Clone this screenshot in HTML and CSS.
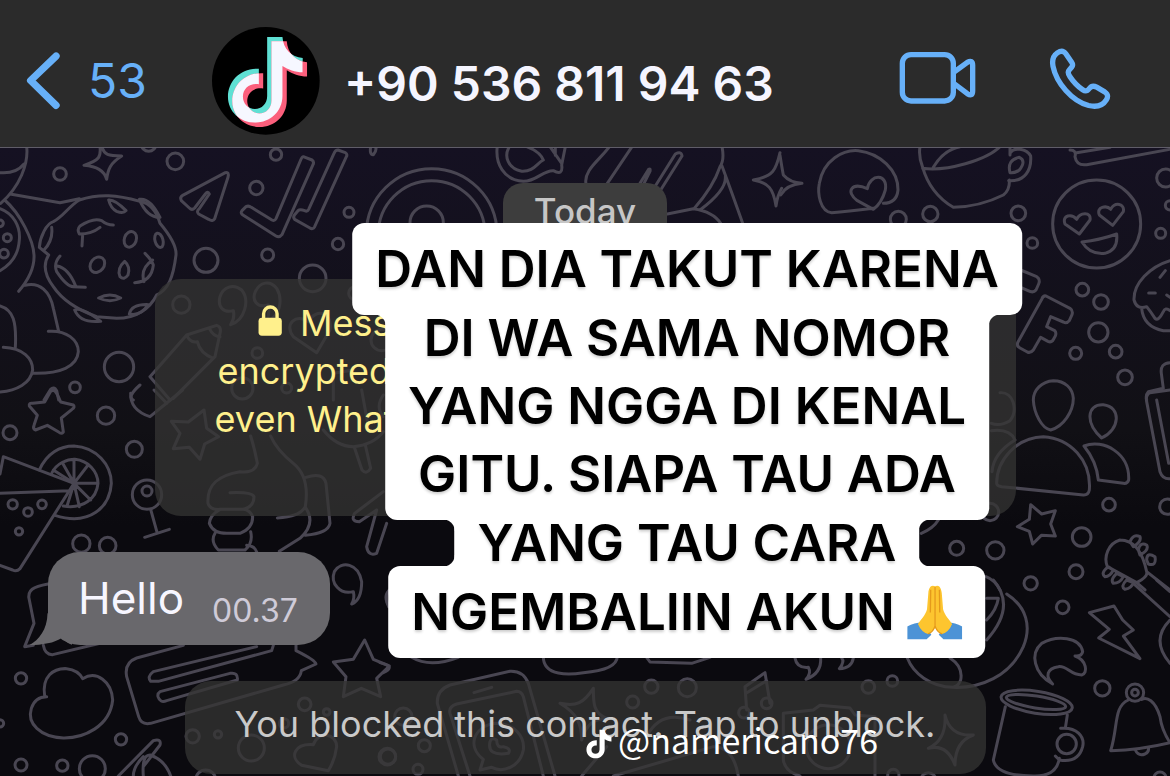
FILE: index.html
```html
<!DOCTYPE html>
<html lang="id">
<head>
  <meta charset="UTF-8" />
  <meta name="viewport" content="width=device-width, initial-scale=1" />
  <title>+90 536 811 94 63</title>
  <link rel="stylesheet" href="styles.css">
</head>
<body>
  <header class="topbar">
    <a href="#chats" class="back" aria-label="Back, 53 unread">
      <svg class="back-icon" viewBox="74 150 112 184"><path d="M168 168L91 242L168 317" /></svg>
      <span>53</span>
    </a>
    <svg class="avatar" viewBox="636 80 325 325" role="img" aria-label="Profile photo">
      <defs>
        <path id="note" d="M802 110H848C850 144 874 171 909 173V216C886 216 865 208 848 197V288C848 334 811 368 766 368C720 368 684 334 684 290C684 243 722 203 777 206V252C750 248 729 264 729 290C729 311 745 327 765 327C786 327 802 311 802 288Z" />
        <clipPath id="note-clip"><use href="#note" /></clipPath>
      </defs>
      <circle cx="798" cy="242" r="162" fill="#000" />
      <use href="#note" fill="#5fe0d4" />
      <use href="#note" x="13" y="13" fill="#fb5f7c" />
      <g clip-path="url(#note-clip)"><use href="#note" x="13" y="13" fill="#f6f7ff" /></g>
    </svg>
    <h1 class="contact">+90 536 811 94 63</h1>
    <div class="actions">
      <button type="button" aria-label="Video call">
        <svg class="video-icon" viewBox="350 150 240 168">
          <rect x="363" y="164" width="153" height="139" rx="26" />
          <path d="M520 215L558 187Q574 178 574 196V273Q574 291 558 281L520 252" />
        </svg>
      </button>
      <button type="button" aria-label="Voice call">
        <svg class="phone-icon" viewBox="804 136 192 194">
          <path d="M832 156C842 149 851 150 857 158L875 184C881 193 877 198 868 207C862 213 864 219 870 228C880 243 893 257 908 267C917 273 922 271 928 263C934 255 941 254 950 259L974 273C984 280 985 287 979 297C968 315 948 319 926 314C876 301 829 246 819 196C816 180 819 165 832 156Z" />
        </svg>
      </button>
    </div>
  </header>

  <main class="chat">
    <svg class="wallpaper" viewBox="0 148 1170 628" preserveAspectRatio="xMinYMin slice" aria-hidden="true">
      <!-- top left: planet, paper plane, ticks -->
      <g transform="translate(0 140) scale(.33333)">
        <circle cx="180" cy="102" r="19" /><circle cx="526" cy="64" r="25" /><circle cx="828" cy="44" r="17" />
        <circle cx="769" cy="144" r="20" /><circle cx="1047" cy="217" r="15" /><circle cx="1014" cy="312" r="17" />
        <circle cx="803" cy="345" r="18" /><circle cx="618" cy="361" r="36" /><circle cx="938" cy="415" r="40" />
        <circle cx="544" cy="494" r="26" /><circle cx="357" cy="681" r="44" /><circle cx="225" cy="742" r="16" />
        <circle cx="22" cy="293" r="12" /><circle cx="12" cy="341" r="13" /><circle cx="0" cy="250" r="10" />
        <circle cx="772" cy="639" r="16" /><circle cx="446" cy="12" r="22" /><circle cx="727" cy="745" r="32" />
        <circle cx="860" cy="744" r="15" /><circle cx="1066" cy="460" r="20" />
        <path d="M300 20C303 50 300 60 252 76C290 80 312 90 320 118C324 88 330 70 365 48C325 48 312 45 306 20" />
        <path d="M80 20C86 70 60 140 2 190M0 98Q48 102 72 72M30 162L180 188L238 176M0 206C40 220 62 260 58 300C55 350 30 375 0 392M14 180C60 220 100 300 102 345C104 385 85 420 56 454" />
        <path d="M75 436C120 425 150 455 160 505L176 574M145 574C200 570 235 600 235 635C232 680 180 702 100 700M0 498C40 510 50 545 46 622M10 622C70 625 98 655 98 690C92 730 50 752 0 756" />
        <path d="M238 180C300 160 350 165 420 184C450 190 470 215 480 250C505 280 530 320 528 345C520 410 505 450 470 465C450 505 410 535 350 535L290 530C220 505 180 470 160 440C130 400 130 370 146 345L118 322C120 290 140 250 160 245C190 230 205 200 238 180Z" />
        <path d="M326 180Q345 178 378 212Q370 222 350 214Q332 205 326 180ZM418 178Q450 172 480 232Q440 232 418 178ZM155 262Q160 300 132 330M340 255Q320 255 305 242Q280 232 240 258Q230 268 238 282Q275 282 300 262M246 318L248 284M180 348Q160 370 170 395Q200 440 220 440L256 442M172 378Q205 385 226 436M435 340Q455 360 460 375Q455 425 404 428M458 360Q420 385 432 425M296 474Q330 456 362 474Q330 490 296 474ZM224 510Q245 500 302 544Q240 550 224 510ZM388 522Q395 492 445 494Q420 530 388 522Z" />
        <ellipse cx="391" cy="298" rx="18" ry="24" transform="rotate(20 391 298)" /><ellipse cx="477" cy="301" rx="12" ry="22" transform="rotate(-15 477 301)" />
        <ellipse cx="292" cy="374" rx="20" ry="25" transform="rotate(38 292 374)" /><path d="M374 364Q350 385 360 410Q372 422 384 405Q392 380 374 364Z" />
        <path d="M676 98Q688 94 684 112L644 236Q638 246 626 238L596 222Q588 214 598 206L628 162Q624 152 616 162L584 204Q576 212 568 204L544 182Q538 172 548 166Z" />
        <path d="M910 50L936 60Q944 66 938 76L846 284Q838 294 828 288L730 226Q720 220 726 212L738 200Q746 196 754 202L816 240Q824 244 828 236L902 60Q906 50 910 50Z" />
        <path d="M1014 30L1036 38Q1044 44 1038 52L944 260Q938 270 930 264L884 238Q878 232 884 224L894 212Q900 206 914 212Q922 216 926 208L1002 40Q1006 30 1014 30Z" />
        <path d="M1112 20Q1108 45 1120 44Q1132 30 1126 20M700 512C670 520 652 500 660 470C670 440 700 430 725 450C750 480 735 540 692 554Q705 535 700 512ZM805 495C770 505 755 480 766 455C780 425 810 420 830 445C850 480 840 530 800 545Q810 520 805 495Z" />
        <path d="M450 710L560 585L650 556Q665 560 660 580L645 650L520 775M560 585Q570 610 592 605Q600 640 640 655M628 565Q640 590 660 590M420 735Q380 770 400 780M450 710L510 780M132 780L152 748Q162 738 170 752L176 780M950 638L880 590C850 550 890 520 925 545C950 500 1000 520 990 570Z" />
        <circle cx="1145" cy="600" r="32" /><path d="M1000 780V700L1060 690" />
      </g>

      <!-- top middle: disc, candy, hand -->
      <g transform="translate(380 140) scale(.33333)">
        <circle cx="155" cy="282" r="196" /><circle cx="155" cy="282" r="160" /><circle cx="140" cy="248" r="50" />
        <path d="M352 18C345 70 370 120 430 124C470 124 490 90 520 92Q550 108 545 75L556 20M388 20C370 50 385 85 425 94C460 96 470 70 490 60Q480 35 440 20M510 20L545 70M526 20V46" />
        <path d="M688 20C660 60 610 90 618 132M756 20L682 130M780 130L806 88Q812 84 810 94L792 130M826 138L886 42Q904 32 906 48L842 150M1026 20Q1034 60 1020 80Q1000 140 942 206M1026 78Q1060 170 1088 250M862 222L940 206Q1000 215 1022 250M1036 110Q1040 150 960 210" />
        <path d="M1200 38C1188 90 1180 110 1120 120C1165 128 1180 145 1188 198C1192 170 1196 160 1205 145" />
      </g>

      <!-- top right: cup, smiley, cupcake, letter F -->
      <g transform="translate(780 140) scale(.33333)">
        <circle cx="355" cy="238" r="24" /><circle cx="451" cy="222" r="23" /><circle cx="715" cy="220" r="22" />
        <circle cx="757" cy="309" r="16" /><circle cx="907" cy="449" r="19" /><circle cx="963" cy="486" r="22" />
        <circle cx="955" cy="577" r="29" /><circle cx="887" cy="640" r="18" /><circle cx="1007" cy="635" r="19" />
        <circle cx="1035" cy="712" r="22" /><circle cx="1142" cy="280" r="15" /><circle cx="1157" cy="114" r="27" /><circle cx="1170" cy="196" r="14" />
        <path d="M0 46Q6 85 10 105Q30 128 66 130Q20 134 2 165" />
        <path d="M280 205Q200 215 155 218C120 215 112 160 118 130C130 60 190 28 235 32C300 40 355 90 354 150Q350 190 310 190M280 208L232 182C195 155 215 125 262 146C270 100 325 100 316 150Q305 190 280 208Z" />
        <path d="M420 20Q415 50 428 82Q450 160 520 202Q600 200 670 165Q690 150 688 120M428 85C500 95 620 60 660 20M460 82Q490 30 540 20M690 40C700 20 740 25 752 48C755 90 735 125 686 122M690 98Q680 60 718 52Q740 62 718 90Q705 100 690 98ZM690 20V45" />
        <path d="M870 30Q890 30 885 50Q890 78 920 74L1170 28M890 38L990 22" />
        <circle cx="950" cy="252" r="132" />
        <path d="M898 282L855 252C845 225 875 220 890 238C900 215 935 215 930 240ZM998 256L958 225C948 200 980 195 992 208C1005 185 1035 190 1030 215ZM906 306Q960 300 1010 282Q1015 330 975 340Q930 345 906 306Z" />
        <path d="M722 390L770 410Q782 418 776 432L768 450Q760 460 744 452L722 442" />
        <path d="M798 468L870 505Q880 512 876 524L868 542Q860 552 850 546L812 530L800 560L824 572Q830 578 826 588L818 602Q812 608 804 604L782 592L760 630Q752 640 742 636L720 624Q708 618 714 606L786 476Q790 466 798 468Z" />
        <path d="M1170 362C1110 380 1060 430 1062 480Q1070 510 1100 500Q1112 515 1125 535Q1135 545 1150 515Q1155 500 1170 512M1085 505Q1090 560 1150 572H1170M1156 392L1140 412M1106 459H1126M1160 465L1170 472" />
        <path d="M1170 668Q1140 670 1144 700L1150 745L1105 755Q1096 765 1100 780" />
      </g>

      <!-- middle left: star, cocktail, thumbs up -->
      <g transform="translate(0 390) scale(.33333)">
        <circle cx="318" cy="77" r="26" /><circle cx="30" cy="128" r="21" /><circle cx="403" cy="178" r="24" />
        <circle cx="244" cy="461" r="26" /><circle cx="323" cy="467" r="25" /><circle cx="38" cy="343" r="14" />
        <circle cx="84" cy="366" r="13" /><circle cx="126" cy="343" r="13" /><circle cx="57" cy="424" r="11" />
        <path d="M160 0Q170 5 182 36L220 45Q226 52 216 58L184 84L190 126Q184 134 176 126L142 106L106 120Q98 116 102 106L112 76L88 48Q86 38 98 40L134 36L152 4Z" />
        <path d="M612 60L620 115L656 140L614 162L600 208L568 172L520 176L540 130L514 94L565 96Z" />
        <path d="M118 240C140 190 180 168 222 168C290 172 334 225 334 280C330 350 270 410 165 376" />
        <path d="M156 248C170 220 200 208 225 208C265 212 294 245 294 280C290 325 250 358 190 348M222 280L160 240M222 280L188 220M222 280V208M222 280L262 228M222 280H294M222 280L272 330M222 280L238 350M222 280L202 345" />
        <path d="M0 252L10 200L222 280L60 536Q50 546 38 540L0 526M0 310L210 302" />
        <circle cx="441" cy="314" r="44" /><circle cx="441" cy="303" r="15" /><path d="M452 358L472 430M434 442L508 418" />
        <path d="M392 10Q390 60 450 80L548 0M462 0L500 40" />
        <path d="M752 138Q765 180 772 220Q765 250 720 245C660 255 620 280 624 340Q630 360 660 358H730Q762 350 762 320Q755 305 690 308M660 358Q630 375 628 400Q640 430 680 430H720Q758 415 758 380Q750 360 730 358M645 430Q630 455 655 480H735Q760 460 752 425M812 138Q830 180 880 220Q930 260 916 350Q900 380 832 384M916 352Q950 400 900 445L838 484M918 262Q970 245 978 280L990 400Q985 430 916 436M740 466Q765 468 770 486" />
        <path d="M970 120Q1010 170 1060 170Q1120 165 1150 125M1064 175L1086 240Q1100 255 1112 235L1096 165M1150 305L1064 370Q1050 395 1078 395L1130 360M1130 360L1100 470Q1105 500 1130 490L1160 400M1085 0L1105 110M1150 15Q1125 50 1150 80" />
      </g>

      <!-- bottom left: speech cards, cloud, star -->
      <g transform="translate(0 580) scale(.33333)">
        <circle cx="63" cy="295" r="17" /><circle cx="363" cy="478" r="17" /><circle cx="63" cy="555" r="18" />
        <circle cx="187" cy="557" r="17" /><circle cx="277" cy="566" r="39" /><circle cx="0" cy="430" r="11" />
        <circle cx="578" cy="469" r="20" /><circle cx="654" cy="463" r="11" /><circle cx="754" cy="504" r="39" />
        <circle cx="914" cy="373" r="19" /><circle cx="980" cy="396" r="10" /><circle cx="1164" cy="530" r="23" /><circle cx="617" cy="600" r="30" /><circle cx="852" cy="430" r="14" />
        <path d="M144 12C100 20 80 30 88 60L102 130L74 200L100 196M130 196Q135 225 158 224L300 190" />
        <path d="M134 348C125 290 160 264 200 266Q235 270 248 296C290 270 335 305 338 360C330 440 250 475 190 474C120 470 80 430 94 385Q105 350 140 350" />
        <path d="M550 196L410 234Q372 248 380 290L416 410Q424 436 452 430L850 315Q900 305 904 272L948 252Q945 240 888 212V196" />
        <path d="M770 200L460 275Q440 290 452 304H475L815 212L820 196M480 335L690 280Q715 276 712 300L500 362Q480 370 474 350Q472 340 480 335Z" />
        <path d="M1094 180L1120 238L1168 258L1130 295L1142 350L1084 325L1030 350L1038 290L1000 246L1060 238Z" />
        <path d="M1060 35Q1065 55 1055 72Q1085 60 1085 5C1075 -50 1025 -60 1003 -25C990 10 1020 45 1060 35ZM1168 30Q1152 55 1166 80" />
        <path d="M355 588L460 482Q485 475 480 495L430 560M430 588Q425 525 450 525Q495 540 512 588M400 588Q400 560 430 530" />
        <path d="M985 572L905 556C865 530 885 490 940 494C955 450 1010 460 1010 500Q1005 540 985 572Z" />
      </g>

      <!-- bottom middle: phone, notes -->
      <g transform="translate(380 560) scale(.33333)">
        <circle cx="814" cy="380" r="20" /><circle cx="922" cy="383" r="27" /><circle cx="758" cy="426" r="18" />
        <circle cx="133" cy="557" r="18" /><circle cx="22" cy="590" r="25" /><circle cx="114" cy="628" r="15" /><circle cx="70" cy="470" r="26" />
        <path d="M95 292Q150 325 235 292M490 290C490 350 570 345 610 338Q710 330 712 290M800 292L810 306L935 310L990 292M0 308Q50 320 10 338M28 90Q8 110 28 138" />
        <path d="M235 648L172 430Q170 390 210 375L390 334Q430 332 445 370L525 648M270 648L210 460Q205 440 230 432L410 394Q425 395 430 410L490 648M282 398L335 382" />
        <path d="M300 630L310 598C260 560 280 500 345 490C405 490 435 530 430 570C420 620 370 640 335 622ZM330 545Q320 590 385 580Q395 565 370 560Q350 565 350 540Q335 530 330 545Z" />
        <path d="M540 430C590 440 610 430 640 385C640 430 640 460 680 475C640 480 620 490 605 540C605 490 590 460 540 430Z" />
        <path d="M1100 450L1095 380L1155 338L1170 430M1098 400L1160 362" /><circle cx="1092" cy="458" r="16" /><circle cx="1160" cy="430" r="16" />
        <path d="M605 648L680 560M700 648L1000 560Q1060 560 1075 648M800 530Q840 450 930 480" />
      </g>

      <!-- middle right: people, star, brush -->
      <g transform="translate(780 390) scale(.33333)">
        <circle cx="987" cy="344" r="19" /><circle cx="905" cy="441" r="28" /><circle cx="888" cy="545" r="21" />
        <circle cx="752" cy="580" r="20" /><circle cx="530" cy="475" r="21" /><circle cx="646" cy="481" r="26" /><circle cx="1162" cy="350" r="23" /><circle cx="630" cy="366" r="26" />
        <path d="M820 -28C785 -26 760 0 760 30C762 70 785 115 812 120C850 110 880 65 880 25C878 -5 855 -28 820 -28ZM970 44C920 42 915 100 965 144C1020 120 1025 50 970 44ZM660 8C700 5 715 60 690 92Q660 110 634 100M634 122Q690 115 705 150Q640 190 636 245" />
        <path d="M650 280C650 210 710 142 790 140C870 145 935 210 928 300Q925 316 910 315L665 290Q650 288 650 280ZM912 168C970 145 1050 190 1046 270Q1042 282 1030 280L955 270Q950 215 912 168Z" />
        <path d="M752 344L785 372L826 362L812 402L826 438L784 436L758 462L748 424L712 410L748 388Z" />
        <path d="M1170 0L1110 8Q1096 15 1100 35L1140 245Q1148 268 1170 266M1130 30L1166 220M424 430Q460 415 475 390M618 560Q645 570 660 600" />
        <path d="M1020 450C985 460 970 500 982 530L1070 578Q1105 560 1100 545L1170 600M1020 450Q1080 450 1100 545M1070 578L1095 600M1050 455Q1060 430 1080 440Q1085 455 1060 470ZM1075 480Q1080 455 1100 465Q1108 480 1080 495ZM1100 510Q1100 485 1125 500Q1130 530 1105 522ZM985 530Q960 550 975 560Q990 560 1000 540ZM1010 550Q990 570 1000 580Q1020 580 1030 560ZM1040 570Q1020 590 1035 598Q1055 595 1060 578Z" />
      </g>

      <!-- bottom right: mug, bell, bolt -->
      <g transform="translate(780 580) scale(.33333)">
        <circle cx="848" cy="82" r="19" /><circle cx="967" cy="325" r="23" />
        <circle cx="265" cy="321" r="19" /><circle cx="337" cy="303" r="16" /><circle cx="1065" cy="338" r="26" /><circle cx="1065" cy="338" r="10" />
        <circle cx="860" cy="492" r="29" /><circle cx="340" cy="585" r="17" /><circle cx="445" cy="600" r="22" /><circle cx="1140" cy="594" r="18" />
        <path d="M620 55H655Q650 90 620 120M640 0Q710 80 620 180M680 42C740 80 755 140 730 200C690 290 600 325 520 322C450 320 400 280 382 234M510 234Q550 260 542 300Q535 318 520 322" />
        <path d="M818 312C760 280 750 220 785 190C830 165 900 170 908 215Q905 230 885 228C920 240 925 280 905 285C870 285 860 255 835 260C800 265 795 290 818 312Z" />
        <path d="M928 98L1002 78L1028 120L1060 150L1030 168L1080 236L956 174L988 148Z" />
        <ellipse cx="770" cy="367" rx="108" ry="33" transform="rotate(9 770 367)" /><ellipse cx="768" cy="366" rx="90" ry="18" transform="rotate(9 768 366)" />
        <path d="M676 380L640 540Q650 588 760 588Q830 590 838 535M862 405L856 445M842 445C890 440 915 470 908 500Q895 550 838 540L826 528" />
        <path d="M1045 360C1000 380 1015 440 992 512Q1080 510 1170 488Q1145 450 1140 410C1125 360 1100 350 1085 358M1066 510Q1075 530 1095 522Q1108 515 1105 504M1170 120Q1110 180 1170 250M1060 10L1170 110M1130 0L1170 35" />
        <path d="M45 234Q50 265 85 262Q95 280 78 298Q125 280 122 234M185 234Q195 245 178 266Q215 265 220 234" />
        <path d="M495 405Q510 470 580 465Q525 485 525 555Q500 490 445 505Q500 480 495 405ZM10 400L100 390L120 376L210 384L225 405L285 410V588M10 400V540Q15 575 60 588" /><circle cx="145" cy="500" r="66" />
      </g>
    </svg>

    <div class="messages">
      <p class="day">Today</p>
      <p class="notice">
        <svg class="lock" viewBox="788 500 70 92" aria-hidden="true"><rect x="789" y="538" width="69" height="53" rx="10" /><path d="M804 542V526A20 20 0 0 1 844 526V542" /></svg>
        Messages and calls are end-to-end<br>
        encrypted. No one outside of this chat, not<br>
        even WhatsApp, can read or listen to them.<br>
        Tap to learn more.
      </p>
      <div class="bubble">
        <svg class="tail" viewBox="88 100 130 98" aria-hidden="true"><path d="M144 100C143 150 118 180 90 196C128 196 165 190 188 174Q202 190 218 195V100Z" /></svg>
        <span>Hello</span>
        <time>00.37</time>
      </div>
      <button type="button" class="unblock">You blocked this contact. Tap to unblock.</button>
    </div>

    <div class="caption">
      <span class="cap-row">DAN DIA TAKUT KARENA</span>
      <span class="cap-row inner-top">DI WA SAMA NOMOR<br>YANG NGGA DI KENAL<br>GITU. SIAPA TAU ADA</span>
      <span class="cap-row inner-top inner-bottom">YANG TAU CARA</span>
      <span class="cap-row">NGEMBALIIN AKUN
        <svg class="pray" viewBox="380 10 164 164" role="img" aria-label="folded hands">
          <path d="M380 134Q402 122 424 122L452 158L438 172H380ZM544 134Q522 122 502 122L474 158L488 172H544Z" fill="#4c93d6" />
          <path d="M463 14C450 8 444 20 443 34L439 82C436 98 418 116 412 126Q422 150 442 156Q458 150 463 136Z" fill="#fdc52f" />
          <path d="M463 14C476 8 481 20 483 34L487 82C490 98 508 116 514 126Q504 150 484 156Q468 150 463 136Z" fill="#fdc52f" />
          <path d="M463 16V138M450 24L449 92M476 24L477 92M463 132Q458 150 442 156M463 132Q468 150 484 156" fill="none" stroke="#e59a1c" stroke-width="4" />
        </svg>
      </span>
    </div>

    <p class="watermark">
      <svg viewBox="680 106 234 266" aria-hidden="true"><use href="#note" /></svg>
      @namericano76
    </p>
  </main>
</body>
</html>
```

FILE: styles.css
```css
* {
  box-sizing: border-box;
}
body {
  margin: 0;
  min-height: 100vh;
  display: flex;
  flex-direction: column;
  background-color: #0c0b10;
  color: #fff;
  font-family: Inter, "Liberation Sans", sans-serif;
}
h1, p {
  margin: 0;
}
button {
  font: inherit;
  color: inherit;
  background: none;
  border: none;
  padding: 0;
  cursor: pointer;
}
svg {
  display: block;
}

/* top bar */
.topbar {
  display: flex;
  align-items: center;
  height: 148px;
  padding: 14px 58px 0 25px;
  background-color: #2b2b2b;
  border-bottom: 1px solid #5f5c68;
}
.back {
  display: flex;
  align-items: center;
  gap: 26px;
  width: 187px;
  color: #67b0f8;
  font-size: 48px;
  text-decoration: none;
}
.back-icon,
.actions svg {
  fill: none;
  stroke: #67b0f8;
  stroke-width: 16;
  stroke-linecap: round;
  stroke-linejoin: round;
}
.back .back-icon {
  width: 37px;
  height: 61px;
  stroke-width: 22;
}
.avatar {
  flex: none;
  width: 108px;
  height: 108px;
}
.contact {
  margin-left: 24px;
  padding-top: 6px;
  font-size: 48px;
  font-weight: 600;
  color: #f5f5ff;
  white-space: nowrap;
}
.actions {
  display: flex;
  align-items: center;
  gap: 70px;
  margin-left: auto;
  padding-bottom: 5px;
}
.video-icon {
  width: 80px;
  height: 56px;
}
.phone-icon {
  width: 64px;
  height: 65px;
}

/* chat */
.chat {
  position: relative;
  flex: 1;
  overflow: hidden;
  background: linear-gradient(#151122, #111015 45%, #0b0a0f 60%, #0b0a0f);
}
.wallpaper {
  position: absolute;
  top: 0;
  left: 0;
  width: 100%;
  height: 100%;
}
.wallpaper g {
  fill: none;
  stroke: #494652;
  stroke-width: 9;
  stroke-linecap: round;
  stroke-linejoin: round;
}
.messages {
  position: relative;
  display: flex;
  flex-direction: column;
  align-items: center;
  gap: 36px;
  padding: 35px 48px 2px;
}
.day,
.notice,
.unblock {
  background-color: rgba(53, 53, 51, 0.76);
  text-align: center;
}
.day {
  height: 60px;
  padding: 0 31px;
  border-radius: 20px;
  background-color: #3d3d3d;
  color: #c6c6c6;
  font-size: 35px;
  font-weight: 500;
  line-height: 57px;
}
.notice {
  width: 100%;
  max-width: 861px;
  height: 237px;
  padding: 20px 8px 20px 0;
  border-radius: 26px;
  color: #fff08c;
  font-size: 36px;
  line-height: 48px;
  white-space: nowrap;
}
.lock {
  display: inline-block;
  width: 24px;
  height: 31px;
  margin-right: 8px;
  fill: #fff08c;
}
.lock path {
  fill: none;
  stroke: #fff08c;
  stroke-width: 10;
}
.bubble {
  position: relative;
  align-self: flex-start;
  display: flex;
  gap: 28px;
  width: 282px;
  height: 93px;
  padding: 0 30px;
  border-radius: 32px;
  background-color: #69686c;
  color: #f7f6ff;
  font-size: 44px;
  line-height: 92px;
}
.bubble time {
  padding-top: 13px;
  color: #cfcbd8;
  font-size: 32px;
}
.tail {
  position: absolute;
  left: -19px;
  bottom: -1px;
  width: 43px;
  height: 33px;
  fill: #69686c;
}
.bubble span,
.bubble time {
  position: relative;
}
.unblock {
  width: 100%;
  max-width: 801px;
  height: 93px;
  padding-bottom: 8px;
  border-radius: 26px;
  color: #c9c9c9;
  font-size: 36px;
  white-space: nowrap;
}

/* caption sticker: stacked rows overlap so they read as one shape */
.caption {
  position: absolute;
  top: 75px;
  left: calc(50% + 102px);
  transform: translateX(-50%);
  display: flex;
  flex-direction: column;
  align-items: center;
}
.cap-row {
  position: relative;
  padding: 12px 23px;
  border-radius: 12px;
  background-color: #fff;
  color: #000;
  font-size: 51px;
  font-weight: 600;
  line-height: 68px;
  text-align: center;
  text-shadow: 0 2px 3px rgba(0, 0, 0, 0.2);
  white-space: nowrap;
}
.cap-row + .cap-row {
  margin-top: -23px;
}
.inner-top::before,
.inner-bottom::after {
  content: "";
  position: absolute;
  left: -11px;
  right: -11px;
  height: 12px;
}
.inner-top::before {
  top: 22px;
  background:
    radial-gradient(circle at 0 100%, transparent 11px, #fff 12px) left / 12px 12px no-repeat,
    radial-gradient(circle at 100% 100%, transparent 11px, #fff 12px) right / 12px 12px no-repeat;
}
.inner-bottom::after {
  bottom: 22px;
  background:
    radial-gradient(circle at 0 0, transparent 11px, #fff 12px) left / 12px 12px no-repeat,
    radial-gradient(circle at 100% 0, transparent 11px, #fff 12px) right / 12px 12px no-repeat;
}
.pray {
  display: inline-block;
  width: 55px;
  height: 55px;
  vertical-align: -10px;
}

.watermark {
  position: absolute;
  left: calc(50% + 1px);
  bottom: 12px;
  display: flex;
  align-items: center;
  gap: 6px;
  font-family: "Noto Sans CJK SC", "Noto Sans", sans-serif;
  font-size: 34px;
  line-height: 48px;
}
.watermark svg {
  width: 26px;
  height: 30px;
  margin-top: 8px;
  fill: #fff;
}
```
